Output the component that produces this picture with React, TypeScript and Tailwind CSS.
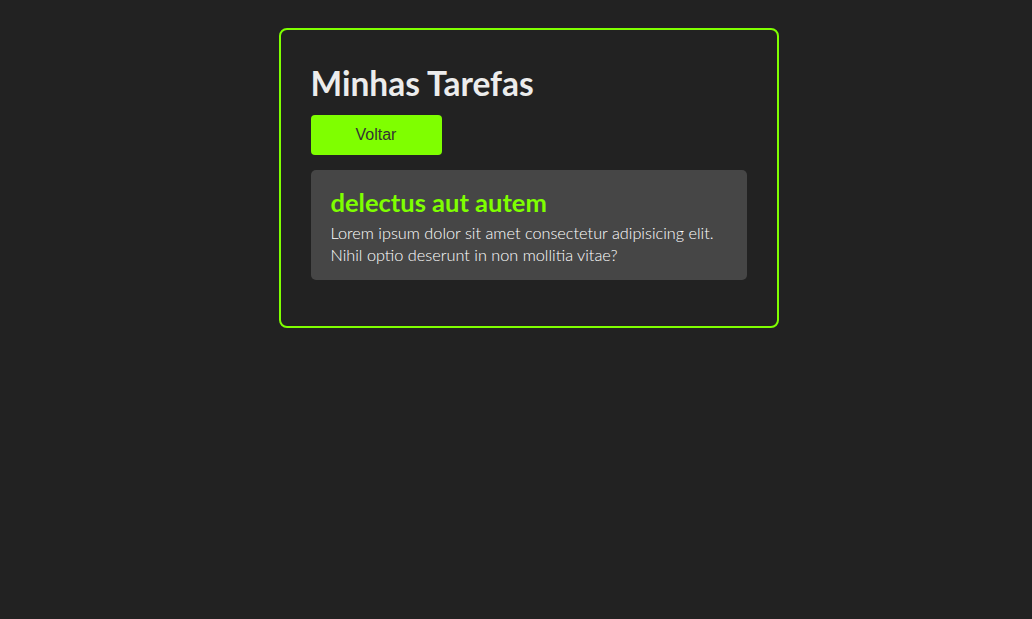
import React from "react";

const tasks = [
	{
		id: 1,
		title: "delectus aut autem",
		description:
			"Lorem ipsum dolor sit amet consectetur adipisicing elit. Nihil optio deserunt in non mollitia vitae?",
	},
];

export default function App() {
	return (
		<div
			className="min-h-screen w-full bg-[#222222] pt-[28px] pl-[25px]"
			style={{ fontFamily: "Lato, 'Noto Sans', sans-serif" }}
		>
			<div className="mx-auto w-[500px] rounded-[8px] border-2 border-[#7fff00] px-[30px] pt-[30px] pb-[46px]">
				<h1 className="text-[33.5px] font-bold leading-[40px] text-[#ececec] pt-[3px] -mb-[3px]">
					Minhas Tarefas
				</h1>
				<button
					className="mt-[15px] h-[40px] w-[131px] rounded-[4px] bg-[#7fff00] text-[16px] text-[#333333]"
					style={{ fontFamily: "'Liberation Sans', Arial, sans-serif" }}
				>
					Voltar
				</button>
				<div className="mt-[15px] flex flex-col gap-3">
					{tasks.map((task) => (
						<div
							key={task.id}
							className="rounded-[5px] bg-[#464646] px-[20px] pt-[17px] pb-[14px]"
						>
							<h2 className="text-[25.5px] font-bold leading-[30px] text-[#7fff00]">
								{task.title}
							</h2>
							<p className="mt-[5px] text-[16.3px] font-light leading-[22px] text-white">
								{task.description}
							</p>
						</div>
					))}
				</div>
			</div>
		</div>
	);
}
